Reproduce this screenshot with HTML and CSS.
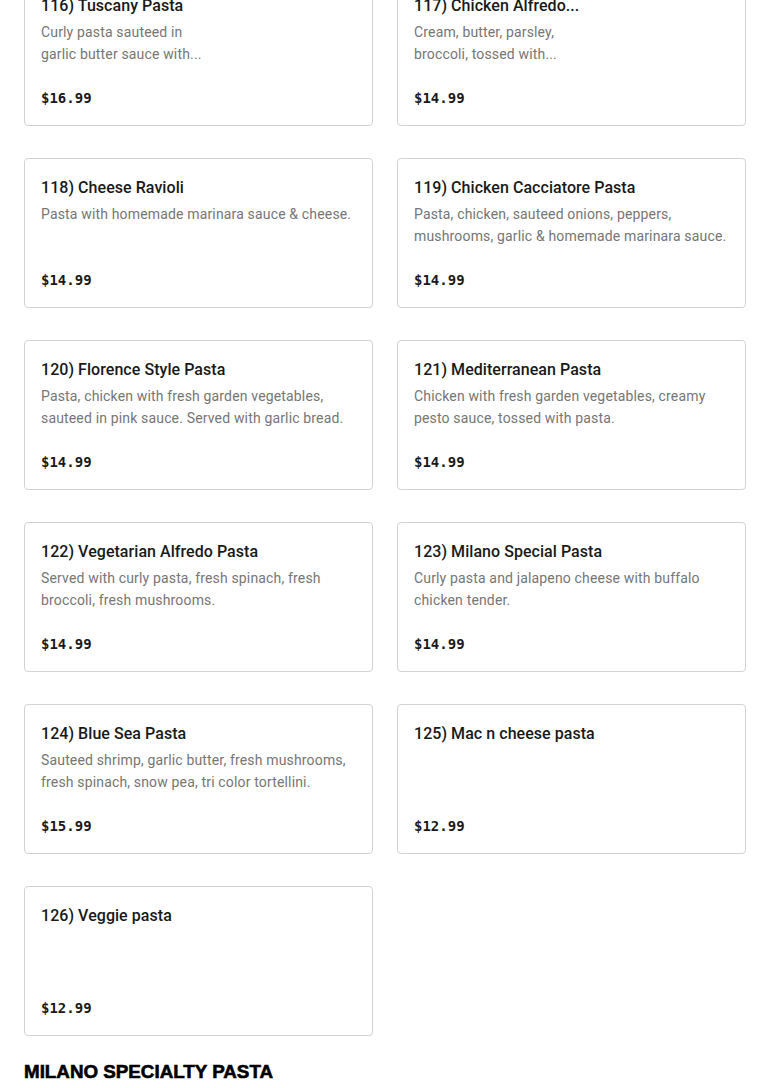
FILE: index.html
```html
<!DOCTYPE html>
<html>
<head>
<meta charset="utf-8">
<link rel="stylesheet" href="styles.css">
</head>
<body>
<main class="page">
  <div class="grid">
    <div class="card">
      <div class="title">116) Tuscany Pasta</div>
      <div class="desc narrow">Curly pasta sauteed in garlic butter sauce with...</div>
      <div class="price">$16.99</div>
    </div>
    <div class="card">
      <div class="title">117) Chicken Alfredo...</div>
      <div class="desc narrow">Cream, butter, parsley, broccoli, tossed with...</div>
      <div class="price">$14.99</div>
    </div>
    <div class="card">
      <div class="title">118) Cheese Ravioli</div>
      <div class="desc">Pasta with homemade marinara sauce &amp; cheese.</div>
      <div class="price">$14.99</div>
    </div>
    <div class="card">
      <div class="title">119) Chicken Cacciatore Pasta</div>
      <div class="desc">Pasta, chicken, sauteed onions, peppers, mushrooms, garlic &amp; homemade marinara sauce.</div>
      <div class="price">$14.99</div>
    </div>
    <div class="card">
      <div class="title">120) Florence Style Pasta</div>
      <div class="desc">Pasta, chicken with fresh garden vegetables, sauteed in pink sauce. Served with garlic bread.</div>
      <div class="price">$14.99</div>
    </div>
    <div class="card">
      <div class="title">121) Mediterranean Pasta</div>
      <div class="desc">Chicken with fresh garden vegetables, creamy pesto sauce, tossed with pasta.</div>
      <div class="price">$14.99</div>
    </div>
    <div class="card">
      <div class="title">122) Vegetarian Alfredo Pasta</div>
      <div class="desc">Served with curly pasta, fresh spinach, fresh broccoli, fresh mushrooms.</div>
      <div class="price">$14.99</div>
    </div>
    <div class="card">
      <div class="title">123) Milano Special Pasta</div>
      <div class="desc">Curly pasta and jalapeno cheese with buffalo chicken tender.</div>
      <div class="price">$14.99</div>
    </div>
    <div class="card">
      <div class="title">124) Blue Sea Pasta</div>
      <div class="desc">Sauteed shrimp, garlic butter, fresh mushrooms, fresh spinach, snow pea, tri color tortellini.</div>
      <div class="price">$15.99</div>
    </div>
    <div class="card">
      <div class="title">125) Mac n cheese pasta</div>
      <div class="price">$12.99</div>
    </div>
    <div class="card">
      <div class="title">126) Veggie pasta</div>
      <div class="price">$12.99</div>
    </div>
  </div>
  <h2 class="section">MILANO SPECIALTY PASTA</h2>
</main>
</body>
</html>
```

FILE: styles.css
```css
html, body {
  margin: 0;
  padding: 0;
  background: #ffffff;
}
.page {
  padding: 0 24px;
  font-family: Roboto, "Liberation Sans", sans-serif;
  color: #191919;
}
.grid {
  margin-top: -24px;
  display: grid;
  grid-template-columns: 349px 349px;
  column-gap: 24px;
  row-gap: 32px;
}
.card {
  box-sizing: border-box;
  height: 150px;
  border: 1px solid #d2d2d2;
  border-radius: 4px;
  padding: 16px 16px 17px;
  display: flex;
  flex-direction: column;
}
.title {
  padding-top: 1px;
  font-size: 16px;
  font-weight: 500;
  line-height: 24px;
  letter-spacing: 0.05px;
  color: #191919;
}
.desc {
  margin-top: 3px;
  font-size: 14px;
  line-height: 22px;
  letter-spacing: 0.16px;
  color: #767676;
}
.desc.narrow {
  max-width: 175px;
}
.price {
  margin-top: auto;
  font-family: "DejaVu Sans Mono", "Liberation Mono", monospace;
  font-weight: bold;
  font-size: 14px;
  line-height: 20px;
  color: #191919;
}
.section {
  margin: 24px 0 0 0;
  font-family: "Liberation Sans", Arial, sans-serif;
  font-weight: 900;
  font-size: 18.8px;
  line-height: 24px;
  -webkit-text-stroke: 0.6px #000;
  color: #000;
}
```
